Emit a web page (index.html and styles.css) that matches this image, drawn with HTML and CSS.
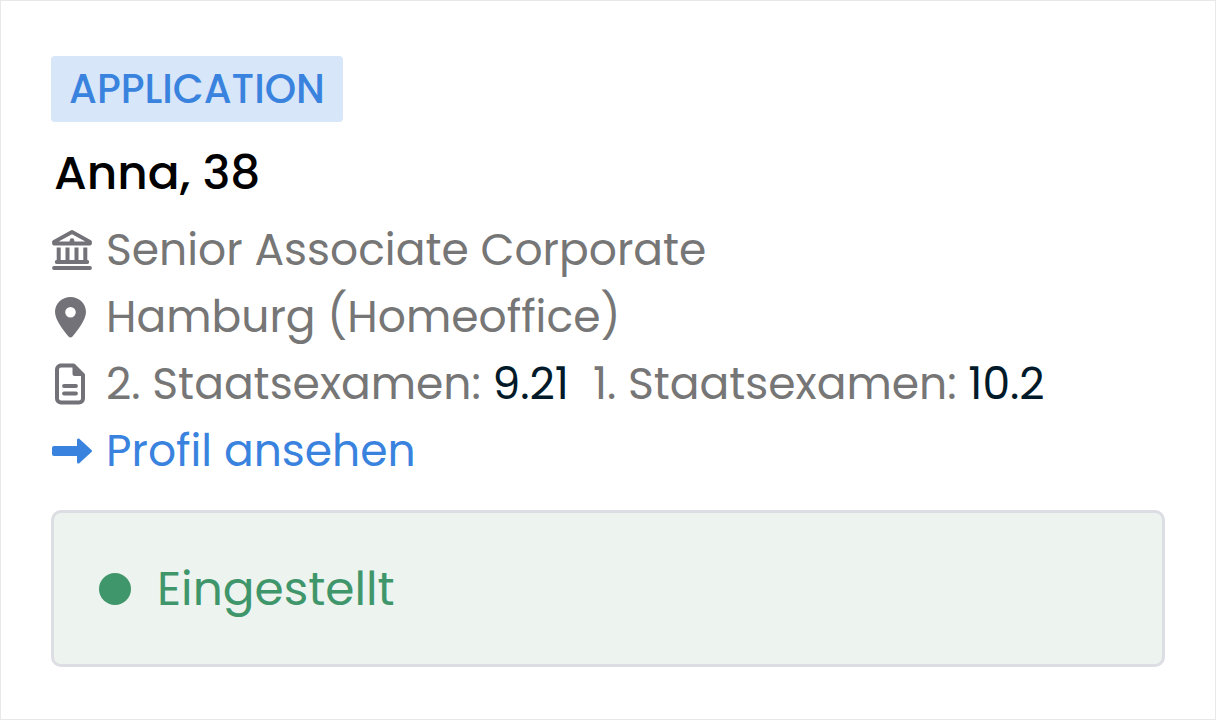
FILE: index.html
```
<!DOCTYPE html>
<html lang="de">

<head>
    <meta charset="UTF-8">
    <meta name="viewport" content="width=device-width, initial-scale=1.0">
    <title>Anna, 38</title>
    <link rel="stylesheet" href="styles.css">
</head>

<body>

    <article class="card">
        <span class="badge">APPLICATION</span>
        <h1 class="name">Anna, 38</h1>

        <ul class="details">
            <li class="row">
                <svg class="icon" viewBox="0 0 40 42" aria-hidden="true">
                    <path d="M2 14.5V12.800L20 3L38 12.800V14.500Z" fill="none" stroke="currentColor" stroke-width="3.800" stroke-linejoin="round" />
                    <path d="M17.700 15V11.500a2.300 2.300 0 0 1 4.600 0V15Z" fill="currentColor" />
                    <path d="M6.700 18.500V33M15.500 18.500V33M24.500 18.500V33M33.300 18.500V33" stroke="currentColor" stroke-width="4" />
                    <path d="M4.700 33H35.300M2 39H38" stroke="currentColor" stroke-width="3.800" stroke-linecap="round" />
                </svg>
                <span class="position">Senior Associate Corporate</span>
            </li>
            <li class="row">
                <svg class="icon" viewBox="0 0 40 42" aria-hidden="true">
                    <path fill="currentColor" fill-rule="evenodd" d="M18.500 1C27 1 34 7.500 34 16C34 24 25 35 20.500 40.500Q18.500 42.500 16.500 40.500C12 35 3 24 3 16C3 7.500 10 1 18.500 1ZM18.500 11a5.300 5.300 0 1 0 0 10.600a5.300 5.300 0 1 0 0-10.600Z" />
                </svg>
                <span class="place">Hamburg (Homeoffice)</span>
            </li>
            <li class="row">
                <svg class="icon" viewBox="0 0 40 42" aria-hidden="true">
                    <path d="M8 2.500H21.500L31 12V35.500a4 4 0 0 1-4 4H9a4 4 0 0 1-4-4V6.500a4 4 0 0 1 4-4Z" fill="none" stroke="currentColor" stroke-width="4" stroke-linejoin="round" />
                    <path d="M20.500 2V11a2 2 0 0 0 2 2H31.500Z" fill="currentColor" />
                    <path d="M12 23H24M12 30.500H24" stroke="currentColor" stroke-width="3.800" stroke-linecap="round" />
                </svg>
                <span class="exam">2. Staatsexamen: <b class="grade">9.21</b></span>
                <span class="exam">1. Staatsexamen: <b class="grade">10.2</b></span>
            </li>
            <li>
                <a class="row link" href="#profil">
                    <svg class="icon" viewBox="0 0 40 42" aria-hidden="true">
                        <path fill="currentColor" d="M2 16H25V10Q25 8 27 8.500L39.500 20Q40.500 21 39.500 22L27 33.500Q25 34 25 32V26H2Q0 26 0 24V18Q0 16 2 16Z" />
                    </svg>
                    <span>Profil ansehen</span>
                </a>
            </li>
        </ul>

        <div class="status">
            <span class="dot"></span>
            <span>Eingestellt</span>
        </div>
    </article>

</body>

</html>
```
FILE: styles.css
```
* {
    box-sizing: border-box;
}

body {
    margin: 0;
    background-color: white;
    font-family: Poppins, Inter, sans-serif;
}

.card {
    min-height: 100vh;
    padding: 55px 50px 52px;
    border: 1px solid #e8e8e8;
    display: flex;
    flex-direction: column;
    align-items: flex-start;
}

.badge {
    padding: 0 18px;
    border-radius: 4px;
    background-color: #d7e6f8;
    color: #3983df;
    font-size: 40px;
    font-weight: 500;
    line-height: 66px;
}

.name {
    margin: 21px 0 13px;
    padding-left: 3px;
    color: black;
    font-size: 47px;
    font-weight: 500;
    line-height: 60px;
}

.details {
    margin: 0;
    padding: 0;
    list-style: none;
    color: #767676;
    font-size: 44px;
    line-height: 67px;
}

.row {
    display: flex;
    align-items: center;
    gap: 14px;
}

.icon {
    width: 40px;
    height: 42px;
    margin-left: 1px;
    flex-shrink: 0;
    color: #737278;
}

.exam + .exam {
    margin-left: 10px;
}

.grade {
    color: #001a29;
    font-weight: 400;
}

.link,
.link .icon {
    color: #3983df;
    text-decoration: none;
}

.status {
    align-self: stretch;
    display: flex;
    align-items: center;
    gap: 26px;
    margin-top: 26px;
    padding: 44px 45px;
    border: 3px solid #dddee3;
    border-radius: 10px;
    background-color: #edf3ef;
    color: #40966b;
    font-size: 47px;
    line-height: 63px;
}

.dot {
    width: 32px;
    height: 32px;
    border-radius: 50%;
    background-color: #40966b;
}
```
